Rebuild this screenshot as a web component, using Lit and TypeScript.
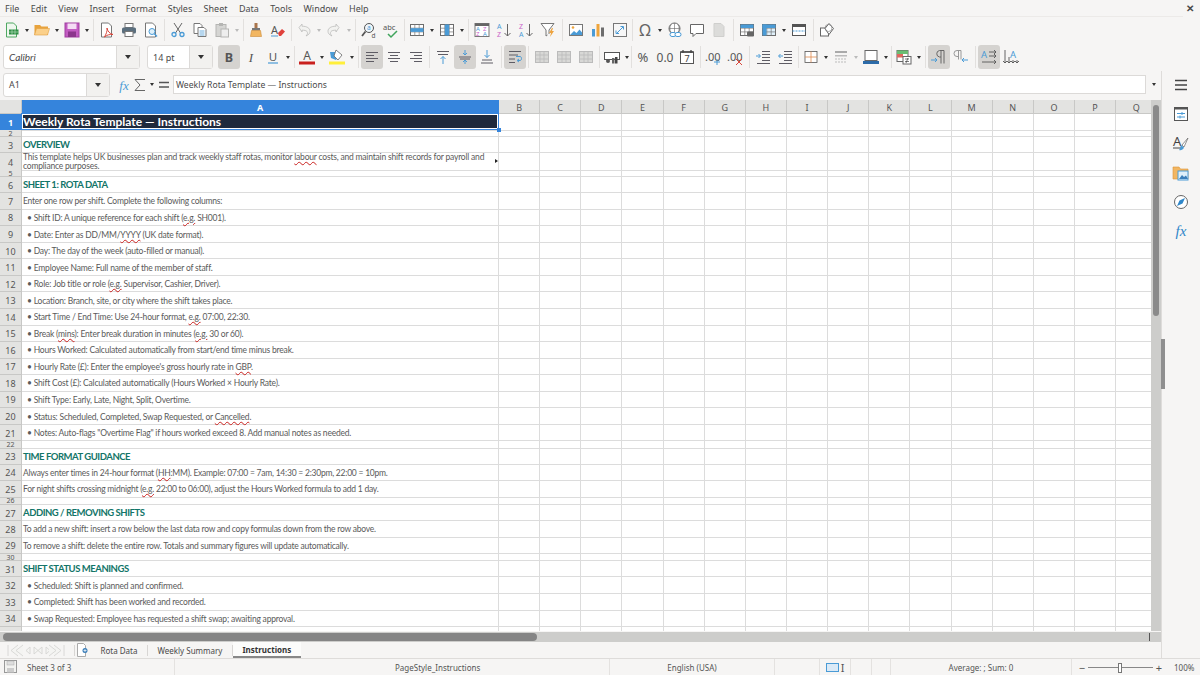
import { LitElement, html, svg, css } from "lit";
import { customElement } from "lit/decorators.js";

const G = "#5e5c64";
const B = "#4a9bd6";

const ico = (body: unknown) => html`<svg class="ico" viewBox="0 0 16 16">${body}</svg>`;
const hl = (rows: number[][], c = G) =>
  rows.map(([x1, x2, y]) => svg`<path d="M${x1} ${y}H${x2}" stroke=${c} fill="none"/>`);
const tbl = (fill: string) => svg`
  <rect x="1.5" y="2.5" width="13" height="11" fill=${fill} stroke="#6d6d6d"/>
  <path d="M1.5 6.2h13M1.5 9.9h13M5.8 2.5v11M10.2 2.5v11" stroke="#777" stroke-width=".7"/>`;

const icons: Record<string, unknown> = {
  newdoc: ico(svg`<path d="M2.500 1h7l3 3v11h-10z" fill="#eef7ee" stroke="#4fa862"/><rect x="5" y="7.500" width="9.500" height="5" fill="#2f8f45"/><path d="M5 10h9.500M8 7.500v5M11 7.500v5" stroke="#bfe5c6" stroke-width=".6"/>`),
  open: ico(svg`<path d="M.5 3h5.500l1.500 1.500H14V13H.5z" fill="#e8a33d"/><path d="M.5 13l2-6.500h13L13.500 13z" fill="#fbd08a" stroke="#e0a042" stroke-width=".6"/>`),
  save: ico(svg`<rect x="1" y="1" width="14" height="14" fill="#c25bc2" stroke="#a03fa0"/><rect x="3.500" y="1.500" width="9" height="5.500" fill="#f4dcf4"/><rect x="4" y="9.500" width="8" height="5.500" fill="#8c358c"/>`),
  pdf: ico(svg`<path d="M2.500 1h7l3 3v11h-10z" fill="#fff" stroke="#777"/><path d="M8 6c.8 3.500 2.500 5.500 6 6.500-3.500-.2-6 .3-8.500 2.500 1.500-3 3-5.500 2.500-9z" fill="none" stroke="#d8473c"/>`),
  print: ico(svg`<rect x="4" y="1.500" width="8" height="4" fill="#fff" stroke="#777"/><rect x="1" y="5.500" width="14" height="6" rx="1.500" fill="#5b6f7e"/><rect x="4" y="9.500" width="8" height="5" fill="#fff" stroke="#777"/>`),
  preview: ico(svg`<path d="M2.500 1h7l3 3v11h-10z" fill="#fff" stroke="#777"/><circle cx="9" cy="9.500" r="3" fill="#dff0fa" stroke=${B}/><path d="M11.300 11.800l2.700 2.700" stroke=${B} stroke-width="1.400"/>`),
  cut: ico(svg`<path d="M4 1l6.500 10M12 1L5.500 11" stroke="#666" fill="none"/><circle cx="4" cy="12.500" r="2" fill="none" stroke=${B} stroke-width="1.300"/><circle cx="12" cy="12.500" r="2" fill="none" stroke=${B} stroke-width="1.300"/>`),
  copy: ico(svg`<path d="M2 1.500h6l2 2v8H2z" fill="#fff" stroke="#777"/><path d="M6 5.500h6l2 2v7H6z" fill="#fff" stroke="#777"/><path d="M7.500 9h5M7.500 11h5M7.500 13h5" stroke=${B} stroke-width=".8"/>`),
  paste: ico(svg`<rect x="2" y="2.500" width="10" height="12" fill="#d5d5d3" stroke="#b5b5b3"/><rect x="5" y="1" width="4" height="3" fill="#b5b5b3"/><rect x="7" y="7" width="7.500" height="8" fill="#eee" stroke="#b5b5b3"/>`),
  clone: ico(svg`<rect x="6.500" y="1" width="3" height="5" fill="#a9744a"/><rect x="4" y="6" width="8" height="2.500" fill="#777"/><path d="M3.500 8.500h9l1 6h-11z" fill="#f2b661" stroke="#c98a38" stroke-width=".6"/>`),
  clear: ico(svg`<text x="1" y="11.500" class="t" font-size="11" fill="#555">A</text><path d="M1 14h7" stroke=${B}/><path d="M8 11l4-4 3 2.500-4 4.500H9z" fill="#e0413c"/>`),
  undo: ico(svg`<path d="M3 5.500l3-3.500v2.200c5 0 8 2 8 5 0 2-1 3.500-4 4.800 1.500-1.500 2-3 1-4.500-.8-1-2.500-1.300-5-1.300V10z" fill="#f2f2f0" stroke="#bdbdbb" stroke-width=".8"/>`),
  redo: ico(svg`<path d="M13 5.500l-3-3.500v2.200c-5 0-8 2-8 5 0 2 1 3.500 4 4.800-1.500-1.500-2-3-1-4.500.8-1 2.500-1.300 5-1.300V10z" fill="#f2f2f0" stroke="#bdbdbb" stroke-width=".8"/>`),
  find: ico(svg`<circle cx="8" cy="6" r="4.500" fill="#eef6fb" stroke="#555"/><path d="M4.500 9.500l-3.500 4.500" stroke="#555" stroke-width="1.800"/><text x="6" y="8" class="t" font-size="6.500" fill=${B}>a</text><text x="10.500" y="15.500" class="t" font-size="6.500" fill="#555">d</text>`),
  spell: ico(svg`<text x="0" y="8" class="t" font-size="7.500" fill="#555">abc</text><path d="M5 12l3 3 6-6" fill="none" stroke="#3fa45b" stroke-width="1.500"/>`),
  rows: ico(svg`${tbl("#fff")}<rect x="1.500" y="6.200" width="13" height="3.700" fill=${B}/>`),
  cols: ico(svg`${tbl("#fff")}<rect x="5.800" y="2.500" width="4.400" height="11" fill=${B}/>`),
  sort: ico(svg`<rect x="1" y="1.500" width="14" height="13" fill="#fff" stroke="#777"/><rect x="1" y="1.500" width="14" height="2.500" fill="#666"/><text x="2" y="9" class="t" font-size="6" fill=${B}>A</text><text x="9" y="9" class="t" font-size="6" fill="#c864c8">Z</text><text x="2" y="14" class="t" font-size="6" fill="#c864c8">Z</text><text x="9" y="14" class="t" font-size="6" fill=${B}>A</text>`),
  asc: ico(svg`<text x="1" y="7" class="t" font-size="7" fill=${B}>A</text><text x="1" y="14.500" class="t" font-size="7" fill="#c864c8">Z</text><path d="M11.500 2v12M8.500 11l3 3 3-3" fill="none" stroke="#666"/>`),
  desc: ico(svg`<text x="1" y="7" class="t" font-size="7" fill="#c864c8">Z</text><text x="1" y="14.500" class="t" font-size="7" fill=${B}>A</text><path d="M11.500 2v12M8.500 11l3 3 3-3" fill="none" stroke="#666"/>`),
  filter: ico(svg`<path d="M1 1.500h13L9 8v4" fill="#fff" stroke="#777"/><path d="M1 1.500L6 8v6l1.500-1" fill="none" stroke="#777"/><path d="M12 6l-3 5h2l-1 4 4-6h-2l1-3z" fill="#eda33f"/>`),
  image: ico(svg`<rect x="1.500" y="2.500" width="13" height="11" fill="#fff" stroke="#777"/><circle cx="5" cy="5.500" r="1.300" fill="#eea53c"/><path d="M2 13l4-4 2.500 2 3-3.500 2.500 3V13z" fill=${B}/>`),
  chart: ico(svg`<rect x="2" y="7" width="3" height="7.500" fill=${B}/><rect x="6.500" y="2" width="3" height="12.500" fill="#eea53c"/><rect x="11" y="5.500" width="3" height="9" fill="#6d6d6d"/>`),
  pivot: ico(svg`<rect x="1.500" y="1.500" width="13" height="13" fill="#f7f7f7" stroke="#777"/><path d="M5 11l6-6M8.500 4.500H11.500V7.500M4 8.500V11.500H7" fill="none" stroke=${B}/>`),
  omega: ico(svg`<text x="8" y="14" text-anchor="middle" class="t" font-size="16" fill="#666">Ω</text>`),
  link: ico(svg`<circle cx="7.500" cy="6.500" r="5.500" fill="#fff" stroke="#666"/><path d="M2 6.500h11M7.500 1v11M4 2.500c-1.500 3-1.500 5 0 8M11 2.500c1.500 3 1.500 5 0 8" fill="none" stroke="#666" stroke-width=".6"/><rect x="3" y="10.500" width="6" height="4" rx="2" fill="#fff" stroke=${B}/><rect x="8" y="10.500" width="6" height="4" rx="2" fill="#fff" stroke=${B}/>`),
  comment: ico(svg`<path d="M1.500 2.500h13v9H7l-3 3v-3H1.500z" fill="#fff" stroke="#666"/>`),
  headers: ico(svg`<path d="M3 1.500h7l3 3v10H3z" fill="#dcdcda" stroke="#cfcfcd"/>`),
  area: ico(svg`${tbl("#fff")}<rect x="1.500" y="2.500" width="13" height="3.500" fill=${B}/><rect x="8" y="9.500" width="7" height="5" rx="1" fill="#666"/>`),
  freeze: ico(svg`${tbl("#dff0fa")}<rect x="1.500" y="2.500" width="13" height="3.500" fill=${B}/><rect x="1.500" y="2.500" width="4" height="11" fill=${B}/>`),
  split: ico(svg`<rect x="1.500" y="2.500" width="13" height="11" fill="#fff" stroke="#555"/><rect x="1.500" y="2.500" width="13" height="2.500" fill="#555"/><path d="M1.500 9h13" stroke=${B} stroke-dasharray="2 1"/>`),
  shapes: ico(svg`<rect x="1.500" y="6" width="8" height="8" fill="#fff" stroke="#666"/><path d="M10 1.500l4.500 5-4.500 6-4-6z" fill="#fff" stroke="#666"/><circle cx="9.500" cy="6" r="3.500" fill="none" stroke="#888" stroke-width=".7"/>`),

  italic: ico(svg`<text x="8" y="12.500" text-anchor="middle" class="t serif" font-style="italic" font-size="13" fill="#555">I</text>`),
  bold: ico(svg`<text x="8" y="12.500" text-anchor="middle" class="t" font-weight="700" font-size="12.500" fill="#555">B</text>`),
  under: ico(svg`<text x="8" y="11.500" text-anchor="middle" class="t" font-size="11.500" fill="#555">U</text><path d="M3 14h10" stroke=${B} stroke-width="1.200"/>`),
  fontcol: ico(svg`<text x="8" y="11" text-anchor="middle" class="t" font-size="12" fill="#555">A</text><rect x="0" y="12.500" width="16" height="3" fill="#c9211e"/>`),
  bgcol: ico(svg`<path d="M1 3h6l3 3-3 5-5-2z" fill=${B}/><path d="M7 1l6 5-4 5-4-4z" fill="#fff" stroke="#666" stroke-width=".8"/><rect x="0" y="12.500" width="16" height="3" fill="#ffef3a"/>`),
  left: ico(hl([[2, 14, 3.5], [2, 10, 6.5], [2, 14, 9.5], [2, 10, 12.5]])),
  center: ico(hl([[2, 14, 3.5], [4, 12, 6.5], [2, 14, 9.5], [4, 12, 12.5]])),
  right: ico(hl([[2, 14, 3.5], [6, 14, 6.5], [2, 14, 9.5], [6, 14, 12.5]])),
  top: ico(svg`${hl([[2, 14, 2.5], [3, 13, 5.500]])}<path d="M8 15V7.500M5.500 10L8 7.500 10.500 10" fill="none" stroke=${B}/>`),
  vcenter: ico(svg`${hl([[2, 14, 8], [3, 13, 10]])}<path d="M8 1v5M6 4l2 2 2-2M8 15v-4M6 13l2-2 2 2" fill="none" stroke=${B}/>`),
  bottom: ico(svg`${hl([[3, 13, 11], [2, 14, 14]])}<path d="M8 1v7.500M5.500 6L8 8.500 10.500 6" fill="none" stroke=${B}/>`),
  wrap: ico(svg`${hl([[2, 14, 2.5], [2, 11, 6], [2, 8, 10], [2, 8, 13.5]])}<path d="M9 7.500h4c2 0 2 4 0 4h-2M12 10l-2 1.500 2 1.500" fill="none" stroke=${B}/>`),
  merge: ico(svg`<rect x="1.500" y="2.500" width="13" height="11" fill="#d8d8d6" stroke="#bbb"/><path d="M1.500 6h13M1.500 10h13M6 2.500v11M10 2.500v11" stroke="#bbb" stroke-width=".8"/>`),
  currency: ico(svg`<rect x=".5" y="3.500" width="15" height="7" fill="#fff" stroke="#555"/><circle cx="4" cy="12" r="2" fill="#555"/><rect x="8" y="9" width="2.500" height="5.500" fill="#666"/><rect x="11" y="8" width="2.500" height="6.500" fill="#444"/>`),
  percent: ico(svg`<text x="8" y="13" text-anchor="middle" class="t" font-size="13" fill="#555">%</text>`),
  number: ico(svg`<text x="8" y="13" text-anchor="middle" class="t" font-size="12" fill="#555">0.0</text>`),
  date: ico(svg`<rect x="1.500" y="3" width="13" height="11.500" fill="#fff" stroke="#555"/><path d="M1.500 3h13M4 1v3M12 1v3" stroke="#444" stroke-width="1.300"/><text x="8" y="13" text-anchor="middle" class="t" font-size="9" fill="#444">7</text>`),
  adddec: ico(svg`<text x="0" y="11.500" class="t" font-size="11" fill="#555">.00</text><path d="M12 10v6M9 13h6" stroke=${B}/>`),
  deldec: ico(svg`<text x="0" y="11.500" class="t" font-size="11" fill="#555">.00</text><path d="M9 10l6 6M15 10l-6 6" stroke="#d8473c"/>`),
  indent: ico(svg`${hl([[7, 15, 2.5], [7, 15, 5.500], [7, 15, 8.500], [7, 15, 11.500], [2, 15, 14.500]])}<path d="M1 7h4M3.500 5l2 2-2 2" fill="none" stroke=${B}/>`),
  outdent: ico(svg`${hl([[7, 15, 2.5], [7, 15, 5.500], [7, 15, 8.500], [7, 15, 11.500], [2, 15, 14.500]])}<path d="M6 7H2M3.500 5l-2 2 2 2" fill="none" stroke=${B}/>`),
  borders: ico(svg`<rect x="2" y="2.500" width="12" height="11" fill="#fff" stroke="#555" stroke-width=".8"/><path d="M8 2.500v11M2 8h12" stroke="#e08a4f" stroke-width=".8"/>`),
  bstyle: ico(svg`<rect x="2" y="2" width="12" height="2" fill="#aaa"/><rect x="2" y="6" width="12" height="1.500" fill="#bbb"/><path d="M2 10h12M2 13h12" stroke="#bbb" stroke-dasharray="2 1"/>`),
  bcolor: ico(svg`<rect x="2" y="1.500" width="12" height="10" fill="#fff" stroke="#666"/><rect x="0" y="12" width="16" height="3" fill="#2c6ba8"/>`),
  cond: ico(svg`<rect x="1" y="1.500" width="11" height="11" fill="#fff" stroke="#666"/><rect x="1" y="1.500" width="11" height="3.500" fill="#6bbd73"/><rect x="1" y="5" width="6" height="3.500" fill="#e0675f"/><rect x="7" y="7.500" width="8" height="7.500" fill="#fff" stroke="#666"/><path d="M9 10h4M9 12.500h4M10 14l2-5" stroke="#444" stroke-width=".7"/>`),
  ltr: ico(svg`<path d="M13 1.500v13M10 1.500v13M13 1.500H8.500a3.300 3.300 0 0 0 0 6.500H10" fill="none" stroke="#666"/><path d="M0 11h6M4 9l2 2-2 2" fill="none" stroke=${B}/>`),
  rtl: ico(svg`<path d="M8 1.500v9M5.500 1.500v9M8 1.500H4a3 3 0 0 0 0 6h1.500" fill="none" stroke="#999"/><path d="M15 11H9M11 9l-2 2 2 2" fill="none" stroke=${B}/>`),
  horiz: ico(svg`<text x="0" y="9" class="t" font-size="9.500" fill=${B}>A</text><path d="M8 3h7M13 1l2 2-2 2M8 7h7M13 5l2 2-2 2M1 13h14M13 11l2 2-2 2" fill="none" stroke="#555" stroke-width=".9"/>`),
  vert: ico(svg`<text x="7" y="9" class="t" font-size="9.500" fill=${B}>A</text><path d="M2 1v13M0 12l2 2 2-2M6 8v6M4 12l2 2 2-2M10 11v3M8 12l2 2 2-2M14 11v3M12 12l2 2 2-2" fill="none" stroke="#555" stroke-width=".9"/>`),

  fx: ico(svg`<text x="8" y="12.500" text-anchor="middle" class="t serif" font-style="italic" font-size="13" fill=${B}>fx</text>`),
  sigma: ico(svg`<path d="M13 2.500H3l5 5.500-5 5.500h10" fill="none" stroke="#666" stroke-width="1"/>`),
  equal: ico(svg`<path d="M3 5.500h10M3 10h10" stroke="#555" stroke-width="1.500"/>`),
  menu: ico(svg`<path d="M2 3.500h12M2 8h12M2 12.500h12" stroke="#444" stroke-width="1.300"/>`),
  props: ico(svg`<rect x="1.500" y="1.500" width="13" height="13" fill="#fff" stroke="#555"/><rect x="1.500" y="1.500" width="13" height="2" fill="#555"/><path d="M4 7.500h8M4 11h8" stroke=${B}/><path d="M9 6v3M7 9.500v3" stroke=${B}/>`),
  styles: ico(svg`<text x="0" y="11" class="t" font-size="13" fill="#444">A</text><path d="M0 13h10" stroke="#444"/><path d="M15 3l-6 7 2 2z" fill="#fff" stroke="#666" stroke-width=".7"/><path d="M8 10l3 2.500c-1 2.500-3 3-5 2.500 1.500-1 1-3 2-5z" fill=${B}/>`),
  gallery: ico(svg`<path d="M0 2h6l1.500 2H15v10H0z" fill="#f2b661" stroke="#dc9335" stroke-width=".6"/><rect x="5" y="6" width="10" height="9" fill="#dff0fa" stroke=${B}/><path d="M6 14l3-4 2 2 2-1.500 2 3.500z" fill="#3b7fba"/>`),
  nav: ico(svg`<circle cx="8" cy="8" r="6.500" fill="#fff" stroke="#666"/><path d="M12 4L9.500 9.500 4 12l2.500-5.500z" fill="#2e86c9"/>`),
  fxside: ico(svg`<text x="8" y="13" text-anchor="middle" class="t serif" font-style="italic" font-size="15" fill="#2e86c9">fx</text>`),
  doc: ico(svg`<path d="M2.500 1.500h6l2 2v11h-8z" fill="#fff" stroke="#aaa"/><circle cx="10" cy="8.500" r="2.500" fill="#3b7fba"/><path d="M8.500 8.500h3M10 7v3" stroke="#fff" stroke-width=".7"/>`),
  status: ico(svg`<rect x="1.500" y="1.500" width="12" height="12" fill="#f2f2f0" stroke="#999"/><rect x="4" y="2" width="7" height="4" fill="#ddd" stroke="#aaa" stroke-width=".5"/><rect x="4" y="9" width="7" height="4.500" fill="#ccc"/>`),
};

// tab bar navigation, four pale arrows between two end stops
const navArrows = html`<svg class="navsvg" viewBox="0 0 58 13">
  <g fill="#f4f4f2" stroke="#d6d6d4" stroke-width=".9">
    <path d="M1 1v11M11 1L4 6.500 11 12M16 1L9 6.500 16 12"/>
    <path d="M27 3l-4 3.500 4 3.500zM31 3l4 3.500-4 3.500z" transform="translate(-4 0)"/>
    <path d="M27 3l-4 3.500 4 3.500zM31 3l4 3.500-4 3.500z" transform="translate(8 0)"/>
    <path d="M47 1l7 5.500-7 5.500M42 1l7 5.500-7 5.500M57 1v11"/>
  </g>
</svg>`;

// strings name an icon ("!" = pressed), ^ and ~ are dropdown carets, numbers are separators
type Item = string | number;
const bar1: Item[] = ["newdoc", "^", "open", "^", "save", "^", 5, "pdf", "print", "preview", 5, "cut", "copy", "paste", "~", 4, "clone", "clear", 4, "undo", "~", "redo", "~", 5, "find", "spell", 4, "rows", "^", "cols", "^", 5, "sort", "asc", "desc", "filter", 6, "image", "chart", "pivot", 3, "omega", "^", "link", "comment", "headers", 6, "area", "freeze", "^", "split", 6, "shapes"];
const bar2: Item[] = ["bold!", "italic", "under", "^", 4, "fontcol", "^", "bgcol", "^", 5, "left!", "center", "right", 5, "top", "vcenter!", "bottom", 6, "wrap!", 5, "merge", "merge", "merge", 4, "currency", "^", 1, "percent", "number", "date", 4, "adddec", "deldec", 6, "indent", "outdent", 4, "borders", "^", "bstyle", "~", "bcolor", "^", 3, "cond", "^", 5, "ltr!", "rtl", 6, "horiz!", "vert"];

const err = (t: string) => html`<span class="sp">${t}</span>`;
type Row = { kind: string; h?: string; text: unknown };
const rows: Row[] = [
  { kind: "title", text: "Weekly Rota Template — Instructions" },
  { kind: "gap", text: "" },
  { kind: "head", h: "tall", text: "OVERVIEW" },
  { kind: "wrap", text: html`This template helps UK businesses plan and track weekly staff rotas, monitor ${err("labour")} costs, and maintain shift records for payroll and compliance purposes.` },
  { kind: "gap", text: "" },
  { kind: "head", h: "tall", text: "SHEET 1: ROTA DATA" },
  { kind: "body", text: "Enter one row per shift. Complete the following columns:" },
  { kind: "item", text: html`• Shift ID: A unique reference for each shift (${err("e.g.")} SH001).` },
  { kind: "item", text: html`• Date: Enter as DD/MM/${err("YYYY")} (UK date format).` },
  { kind: "item", text: "• Day: The day of the week (auto-filled or manual)." },
  { kind: "item", text: "• Employee Name: Full name of the member of staff." },
  { kind: "item", text: html`• Role: Job title or role (${err("e.g.")} Supervisor, Cashier, Driver).` },
  { kind: "item", text: "• Location: Branch, site, or city where the shift takes place." },
  { kind: "item", text: html`• Start Time / End Time: Use 24-hour format, ${err("e.g.")} 07:00, 22:30.` },
  { kind: "item", text: html`• Break (${err("mins")}): Enter break duration in minutes (${err("e.g.")} 30 or 60).` },
  { kind: "item", text: "• Hours Worked: Calculated automatically from start/end time minus break." },
  { kind: "item", text: html`• Hourly Rate (£): Enter the employee's gross hourly rate in ${err("GBP")}.` },
  { kind: "item", text: "• Shift Cost (£): Calculated automatically (Hours Worked × Hourly Rate)." },
  { kind: "item", text: "• Shift Type: Early, Late, Night, Split, Overtime." },
  { kind: "item", text: html`• Status: Scheduled, Completed, Swap Requested, or ${err("Cancelled")}.` },
  { kind: "item", text: `• Notes: Auto-flags "Overtime Flag" if hours worked exceed 8. Add manual notes as needed.` },
  { kind: "gap", text: "" },
  { kind: "head", h: "tall", text: "TIME FORMAT GUIDANCE" },
  { kind: "body", text: html`Always enter times in 24-hour format (${err("HH")}:MM). Example: 07:00 = 7am, 14:30 = 2:30pm, 22:00 = 10pm.` },
  { kind: "body", text: html`For night shifts crossing midnight (${err("e.g.")} 22:00 to 06:00), adjust the Hours Worked formula to add 1 day.` },
  { kind: "gap", text: "" },
  { kind: "head", h: "tall", text: "ADDING / REMOVING SHIFTS" },
  { kind: "body", text: "To add a new shift: insert a row below the last data row and copy formulas down from the row above." },
  { kind: "body", text: "To remove a shift: delete the entire row. Totals and summary figures will update automatically." },
  { kind: "gap", text: "" },
  { kind: "head", h: "tall", text: "SHIFT STATUS MEANINGS" },
  { kind: "item", text: "• Scheduled: Shift is planned and confirmed." },
  { kind: "item", text: "• Completed: Shift has been worked and recorded." },
  { kind: "item", text: "• Swap Requested: Employee has requested a shift swap; awaiting approval." },
  { kind: "item", text: "• Cancelled: Shift was cancelled and will not be worked." },
];

const columns = "ABCDEFGHIJKLMNOPQ".split("");

@customElement("app-root")
export class AppRoot extends LitElement {
  static styles = css`
    :host {
      display: flex;
      flex-direction: column;
      width: 1200px;
      height: 675px;
      overflow: hidden;
      background: #f6f5f4;
      color: #4a4a4a;
      font-family: "Noto Sans", sans-serif;
      font-size: 9px;
    }
    .ico { width: 16px; height: 16px; display: block; overflow: visible; }
    .t { font-family: "Noto Sans", sans-serif; }
    .serif { font-family: "Liberation Serif", serif; }

    .menubar { height: 16px; display: flex; align-items: center; padding-left: 5px; gap: 11.4px; position: relative; flex: none; }
    .close { position: absolute; right: 6px; top: 1px; font-size: 10px; font-weight: 700; }
    .bar { display: flex; align-items: center; flex: none; }
    .bar1 { height: 27px; padding-left: 1px; border-top: 1px solid #eceae8; box-sizing: border-box; margin-right: 17px; }
    .bar2 { height: 28px; padding-left: 3px; }
    .btn { width: 22px; height: 24px; display: flex; align-items: center; justify-content: center; border-radius: 3px; flex: none; }
    .btn.on { background: #d5d3d0; }
    .caret { width: 8px; display: flex; justify-content: center; flex: none; }
    .caret::before { content: ""; border: 2.5px solid transparent; border-top: 3px solid #333; border-bottom: 0; }
    .caret.off::before { border-top-color: #bbb; }
    .sep { flex: none; height: 22px; display: flex; justify-content: center; }
    .sep::before { content: ""; width: 1px; background: #e2e0de; }

    .combo { height: 24px; display: flex; background: #fff; border: 1px solid #dcdad8; border-radius: 3px; box-sizing: border-box; flex: none; }
    .combo .val { flex: 1; padding-left: 5px; display: flex; align-items: center; font-size: 9px; }
    .combo .drop { width: 22px; background: #f2f1ef; border-left: 1px solid #dcdad8; display: flex; align-items: center; justify-content: center; }
    .drop::before { content: ""; border: 3.5px solid transparent; border-top: 4px solid #333; border-bottom: 0; }
    .fontname { width: 137px; margin-right: 7px; }
    .fontname .val { font-family: "Lato", sans-serif; font-style: italic; font-size: 10px; }
    .fontsize { width: 66px; margin-right: 5px; }

    .body { flex: 1; display: flex; min-height: 0; }
    .main { flex: 1; min-width: 0; display: flex; flex-direction: column; }
    .side { width: 38px; flex: none; border-left: 1px solid #dedcda; display: flex; flex-direction: column; align-items: center; position: relative; padding-top: 6px; gap: 13.2px; }
    .side .btn { height: 16px; }
    .handle { position: absolute; left: -1px; top: 268px; width: 4px; height: 50px; background: #8f8f8f; }

    .formula { height: 29px; display: flex; align-items: center; padding: 0 0 2px 3px; box-sizing: border-box; flex: none; }
    .namebox { width: 107px; margin-right: 6px; }
    .formula .btn { width: 16px; }
    .input { flex: 1; height: 17px; margin-left: 1px; background: #fff; border: 1px solid #dcdad8; padding-left: 2px; display: flex; align-items: center; font-size: 8.65px; }
    .fcaret { width: 15px; display: flex; justify-content: center; }

    .sheet { flex: 1; min-height: 0; display: flex; }
    .grid { width: 1151px; overflow: hidden; background: #fff; position: relative; }
    .row { display: grid; grid-template-columns: 22px 477px repeat(16, 41.15px); height: 16.55px; box-sizing: border-box; }
    .row.tall { height: 16px; }
    .row.gap { height: 7.3px; }
    .row.title { height: 16px; }
    .row.cols { height: 14px; }
    .hd { background: #e3e3e1; color: #555; display: flex; align-items: center; justify-content: center; border-right: 1px solid #c8c8c6; border-bottom: 1px solid #c8c8c6; box-sizing: border-box; overflow: hidden; font-size: 9px; padding-top: 1px; }
    .gap .hd { font-size: 7px; padding-top: 0; }
    .hd.on { background: #3584dc; color: #fff; font-weight: 700; border-color: #3584dc; }
    .c { border-right: 1px solid #dcdcdc; border-bottom: 1px solid #dcdcdc; box-sizing: border-box; }
    .a { display: flex; align-items: center; padding-left: 1px; font-family: "Lato", sans-serif; font-size: 8.5px; letter-spacing: -0.2px; color: #5a5a5a; white-space: nowrap; position: relative; min-width: 0; }
    .a.item { padding: 1px 0 0 5px; }
    .a.body { padding-top: 1px; letter-spacing: -0.23px; }
    .a.head { color: #127568; font-weight: 700; font-size: 9.5px; letter-spacing: -0.47px; }
    .a.wrap { white-space: normal; line-height: 8.6px; padding-right: 8px; }
    .a.title { background: #1f2a3d; color: #fff; font-weight: 700; font-size: 12px; letter-spacing: 0; padding-bottom: 1px; }
    .cursor { position: absolute; left: 21px; top: 13px; width: 478px; height: 17px; border: 1.5px solid #3584dc; box-sizing: border-box; outline: 1px solid #fff; outline-offset: -2.5px; pointer-events: none; }
    .cursor::after { content: ""; position: absolute; right: -3px; bottom: -3px; width: 4px; height: 4px; background: #3584dc; }
    .more { position: absolute; right: 0; top: 6px; border: 2.500px solid transparent; border-left: 3px solid #222; border-right: 0; }
    .sp { text-decoration: underline wavy #c9211e; text-decoration-thickness: 0.7px; text-underline-offset: 0.5px; }

    .vscroll { width: 10px; background: #cdcdcb; flex: none; position: relative; }
    .vthumb { position: absolute; left: 2px; top: 5px; width: 6px; height: 211px; border-radius: 3px; background: #8a8a8a; }
    .hscroll { height: 10px; flex: none; margin-top: 1px; background: #cdcdcb; position: relative; }
    .hthumb { position: absolute; left: 3px; top: 1px; width: 534px; height: 8px; border-radius: 4px; background: #858585; }
    .htick { position: absolute; right: 11px; top: 1px; width: 1px; height: 8px; background: #555; }

    .tabs { height: 16px; display: flex; align-items: center; flex: none; }
    .navsvg { width: 58px; height: 13px; margin-left: 7px; flex: none; }
    .tsep { width: 1px; height: 11px; background: #d8d6d4; flex: none; }
    .tsep.first { margin-left: 9px; }
    .tabs .btn { width: 16px; height: 16px; }
    .tab { padding: 0 9.5px; height: 16px; display: flex; align-items: center; font-size: 8px; white-space: nowrap; box-sizing: border-box; }
    .tab.on { font-weight: 700; background: #fcfcfb; border-bottom: 2px solid #888; color: #333; }

    .status { height: 17px; flex: none; border-top: 1px solid #dedcda; display: flex; align-items: center; font-size: 8px; color: #555; box-sizing: border-box; }
    .cell { height: 100%; border-right: 1px solid #e4e2e0; box-sizing: border-box; display: flex; align-items: center; flex: none; white-space: nowrap; overflow: hidden; }
    .cell.mid { justify-content: center; }
    .w-sheet { width: 175px; padding-left: 3px; gap: 8px; }
    .w-page { width: 435px; padding-left: 220px; }
    .w-lang { width: 165px; }
    .w-empty { width: 45px; }
    .w-sel { width: 31px; }
    .w-small { width: 21px; }
    .w-tiny { width: 19px; }
    .w-sum { width: 181px; }
    .sel-ico { width: 11px; height: 7px; background: #dbeaf7; border: 1px solid #4a9bd6; }
    .ibeam { font-size: 11px; margin-left: 2px; }
    .zoom { flex: 1; display: flex; align-items: center; padding-left: 5px; gap: 1px; min-width: 0; }
    .track { width: 65px; height: 1px; background: #888; position: relative; flex: none; }
    .track::after { content: ""; position: absolute; left: 30px; top: -4px; width: 2px; height: 8px; background: #fff; border: 1px solid #777; }
    .pct { margin-left: 9px; }
    .zb { font-size: 11px; line-height: 1; width: 10px; text-align: center; flex: none; }
  `;

  private bar(items: Item[]) {
    return items.map((it) => {
      if (typeof it === "number") return html`<div class="sep" style="width:${it}px"></div>`;
      if (it === "^") return html`<div class="caret"></div>`;
      if (it === "~") return html`<div class="caret off"></div>`;
      const on = it.endsWith("!");
      const name = on ? it.slice(0, -1) : it;
      return html`<div class="btn ${on ? "on" : ""}">${icons[name]}</div>`;
    });
  }

  private gridRow(r: Row, n: number) {
    const cls = r.h ?? (r.kind === "gap" || r.kind === "title" ? r.kind : "");
    return html`<div class="row ${cls}">
      <div class="hd ${n === 1 ? "on" : ""}">${n}</div>
      <div class="c a ${r.kind}">
        <span>${r.text}</span>
        ${n === 4 ? html`<i class="more"></i>` : ""}
      </div>
      ${columns.slice(1).map(() => html`<div class="c"></div>`)}
    </div>`;
  }

  render() {
    return html`
      <div class="menubar">
        ${["File", "Edit", "View", "Insert", "Format", "Styles", "Sheet", "Data", "Tools", "Window", "Help"].map((m) => html`<span>${m}</span>`)}
        <span class="close">✕</span>
      </div>
      <div class="bar bar1">${this.bar(bar1)}</div>
      <div class="bar bar2">
        <div class="combo fontname"><div class="val">Calibri</div><div class="drop"></div></div>
        <div class="combo fontsize"><div class="val">14 pt</div><div class="drop"></div></div>
        ${this.bar(bar2)}
      </div>
      <div class="body">
        <div class="main">
          <div class="formula">
            <div class="combo namebox"><div class="val">A1</div><div class="drop"></div></div>
            <div class="btn">${icons.fx}</div>
            <div class="btn">${icons.sigma}</div>
            <div class="caret"></div>
            <div class="btn">${icons.equal}</div>
            <div class="input">Weekly Rota Template — Instructions</div>
            <div class="fcaret"><div class="caret"></div></div>
          </div>
          <div class="sheet">
            <div class="grid">
              <div class="row cols">
                <div class="hd"></div>
                ${columns.map((c, i) => html`<div class="hd ${i === 0 ? "on" : ""}">${c}</div>`)}
              </div>
              ${rows.map((r, i) => this.gridRow(r, i + 1))}
              <div class="cursor"></div>
            </div>
            <div class="vscroll"><div class="vthumb"></div></div>
          </div>
          <div class="hscroll"><div class="hthumb"></div><div class="htick"></div></div>
          <div class="tabs">
            ${navArrows}
            <div class="tsep first"></div>
            <div class="btn">${icons.doc}</div>
            <div class="tab">Rota Data</div>
            <div class="tsep"></div>
            <div class="tab">Weekly Summary</div>
            <div class="tsep"></div>
            <div class="tab on">Instructions</div>
          </div>
        </div>
        <div class="side">
          <div class="btn">${icons.menu}</div>
          <div class="btn">${icons.props}</div>
          <div class="btn">${icons.styles}</div>
          <div class="btn">${icons.gallery}</div>
          <div class="btn">${icons.nav}</div>
          <div class="btn">${icons.fxside}</div>
          <div class="handle"></div>
        </div>
      </div>
      <div class="status">
        <div class="cell w-sheet">${icons.status}<span>Sheet 3 of 3</span></div>
        <div class="cell w-page">PageStyle_Instructions</div>
        <div class="cell mid w-lang">English (USA)</div>
        <div class="cell w-empty"></div>
        <div class="cell mid w-sel"><div class="sel-ico"></div><span class="ibeam">I</span></div>
        <div class="cell w-small"></div>
        <div class="cell w-tiny"></div>
        <div class="cell mid w-sum">Average: ; Sum: 0</div>
        <div class="zoom">
          <span class="zb">−</span><div class="track"></div><span class="zb">+</span><span class="pct">100%</span>
        </div>
      </div>
    `;
  }
}
